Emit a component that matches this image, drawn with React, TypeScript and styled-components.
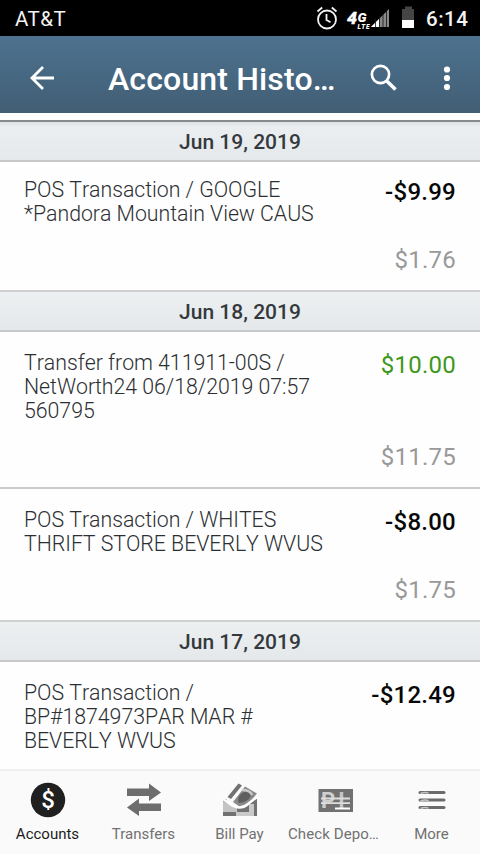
import React from "react";
import styled, { createGlobalStyle } from "styled-components";

const GlobalStyle = createGlobalStyle`
  * { box-sizing: border-box; }
  body { margin: 0; background: #fff; font-family: Roboto, "Liberation Sans", sans-serif; }
`;

const Screen = styled.div`
  width: 480px;
  height: 854px;
  display: flex;
  flex-direction: column;
  overflow: hidden;
  background: #fefefe;
`;

const StatusBar = styled.header`
  height: 36px;
  flex: none;
  display: flex;
  align-items: center;
  padding: 2px 12px 0 15px;
  background: #000;
  color: #f4f4f4;
`;

const Carrier = styled.span`
  flex: 1;
  font-size: 20.5px;
  letter-spacing: 0.5px;
  line-height: 34px;
`;

const StatusIcons = styled.svg`
  display: block;
  width: 110px;
  height: 34px;
`;

const Clock = styled.span`
  width: 43px;
  padding-left: 1px;
  font-size: 20.5px;
  font-weight: 500;
  letter-spacing: 0.5px;
  line-height: 34px;
  white-space: nowrap;
`;

const TitleBar = styled.div`
  height: 77px;
  flex: none;
  display: flex;
  align-items: center;
  padding: 7px 19px 0 26px;
  background: linear-gradient(#4d728f, #486a85 40%, #425e74);
  color: #fff;
`;

const BarIcon = styled.svg<{ $w: number }>`
  display: block;
  flex: none;
  width: ${(p) => p.$w}px;
  height: 32px;
`;

const Title = styled.h1`
  flex: 1;
  margin: 0 0 0 50px;
  padding-top: 2px;
  font-size: 32px;
  font-weight: 500;
  letter-spacing: 0.15px;
  line-height: 40px;
  white-space: nowrap;
`;

const History = styled.main`
  flex: 1;
  min-height: 0;
  margin-top: 7px;
  overflow: hidden;
`;

const DateHeader = styled.h2<{ $pinned?: boolean }>`
  height: 42px;
  margin: 0;
  border-top: 2px solid ${(p) => (p.$pinned ? "#888b8b" : "#cfd1d1")};
  border-bottom: 2px solid #c6c8c9;
  background: ${(p) =>
    p.$pinned
      ? "linear-gradient(#dde1e3, #eaeef0 5px, #e5e9eb)"
      : "linear-gradient(#ecf0f1, #e4e8ea)"};
  color: #34393d;
  font-size: 21px;
  font-weight: 500;
  letter-spacing: 0;
  line-height: 41px;
  text-align: center;
`;

const Row = styled.article<{ $height: number; $top: number; $divided?: boolean }>`
  height: ${(p) => p.$height}px;
  display: flex;
  justify-content: space-between;
  padding: ${(p) => p.$top}px 24px 16px;
  border-bottom: ${(p) => (p.$divided ? "2px solid #cacccc" : "0")};
`;

const Description = styled.p`
  margin: 0;
  color: #2c2f32;
  font-size: 21.3px;
  font-weight: 300;
  font-kerning: none;
  letter-spacing: -0.03px;
  line-height: 24px;
  white-space: pre;
`;

const Figures = styled.div`
  display: flex;
  flex-direction: column;
  justify-content: space-between;
  align-items: flex-end;
`;

const Amount = styled.span<{ $tone: string; $weight: number }>`
  color: ${(p) => p.$tone};
  font-size: 24px;
  font-weight: ${(p) => p.$weight};
  letter-spacing: 0.25px;
  line-height: 28px;
`;

const TabBar = styled.nav`
  height: 85px;
  flex: none;
  display: grid;
  grid-template-columns: repeat(5, 1fr);
  border-top: 2px solid #f0f0f0;
  background: #fafafa;
`;

const Tab = styled.div<{ $active?: boolean }>`
  display: flex;
  flex-direction: column;
  align-items: center;
  padding-top: 10px;
  color: ${(p) => (p.$active ? "#1c1c1c" : "#717171")};
`;

const TabIcon = styled.svg`
  display: block;
  width: 40px;
  height: 38px;
`;

const TabLabel = styled.span<{ $wide?: boolean }>`
  margin-top: 5px;
  padding-right: ${(p) => (p.$wide ? 5 : 1)}px;
  font-size: 15px;
  letter-spacing: ${(p) => (p.$wide ? 0.1 : 0)}px;
  line-height: 20px;
  white-space: nowrap;
`;

const DollarText = styled.text`
  font-family: Roboto, sans-serif;
  font-size: 24px;
  font-weight: 500;
  text-anchor: middle;
`;

const NetworkText = styled.text<{ $size: number }>`
  font-family: Roboto, sans-serif;
  font-size: ${(p) => p.$size}px;
  font-weight: 900;
  font-style: italic;
  fill: #fff;
`;

const CheckText = styled.text`
  font-family: Roboto, sans-serif;
  font-size: 22px;
  font-weight: 700;
  fill: #cfcfcf;
`;

type Transaction = { lines: string[]; amount: string; balance?: string; height: number; top: number; credit?: boolean; divided?: boolean };
type Day = { date: string; pinned?: boolean; items: Transaction[] };

const days: Day[] = [
  {
    date: "Jun 19, 2019",
    pinned: true,
    items: [{ lines: ["POS Transaction / GOOGLE", "*Pandora Mountain View CAUS"], amount: "-$9.99", balance: "$1.76", height: 128, top: 16 }],
  },
  {
    date: "Jun 18, 2019",
    items: [
      { lines: ["Transfer from 411911-00S /", "NetWorth24 06/18/2019 07:57", "560795"], amount: "$10.00", balance: "$11.75", height: 157, top: 19, credit: true, divided: true },
      { lines: ["POS Transaction / WHITES", "THRIFT STORE BEVERLY WVUS"], amount: "-$8.00", balance: "$1.75", height: 131, top: 19 },
    ],
  },
  {
    date: "Jun 17, 2019",
    items: [{ lines: ["POS Transaction /", "BP#1874973PAR MAR #", "BEVERLY WVUS"], amount: "-$12.49", height: 157, top: 19 }],
  },
];

const TransactionRow = ({ item }: { item: Transaction }) => (
  <Row $height={item.height} $top={item.top} $divided={item.divided}>
    <Description>{item.lines.join("\n")}</Description>
    <Figures>
      <Amount $tone={item.credit ? "#3f981c" : "#080808"} $weight={item.credit ? 400 : 500}>{item.amount}</Amount>
      {item.balance && <Amount $tone="#999" $weight={400}>{item.balance}</Amount>}
    </Figures>
  </Row>
);

const AccountsIcon = () => (
  <TabIcon viewBox="0 0 40 38">
    <circle cx="20" cy="19" r="17.2" fill="#202020" />
    <DollarText x="20" y="27.3" fill="#fff">$</DollarText>
  </TabIcon>
);

const TransfersIcon = () => (
  <TabIcon viewBox="0 0 40 38" fill="#6d6d6d">
    <path d="M3 7.5H25V2.5L37 11.5L25 20V15H3ZM37 22.5H15V17.5L3 26.5L15 35V30H37Z" />
  </TabIcon>
);

const BillPayIcon = () => (
  <TabIcon viewBox="0 0 40 38">
    <path d="M3 18H37V35H3Z" fill="#717171" />
    <path d="M3 20L10 24H17V31H3Z" fill="#c4c4c4" />
    <path d="M16 31H30V35H16ZM29 23H34V35H29Z" fill="#c9c9c9" />
    <path d="M17 2L37 14L28 24Q20 30 10 24L6 18Z" fill="#fafafa" />
    <path d="M18.500 2.500L22 4.500L11 18L7.500 16Z" fill="#717171" />
    <path d="M25 5.500L37 12.500L28 23L20 26L13 21Z" fill="#8a8a8a" />
    <path d="M22 12Q30 8 31 15Q27 22 19 22Q16 17 22 12Z" fill="#606060" />
    <path d="M22 9Q30 9 32 14" fill="none" stroke="#c9c9c9" strokeWidth="2.500" />
    <path d="M3 18L10 23Q20 30 28 23L37 16" fill="none" stroke="#fff" strokeWidth="2.500" />
  </TabIcon>
);

const CheckIcon = () => (
  <TabIcon viewBox="0 0 40 38">
    <path d="M2.5 8H37V31H2.5Z" fill="#717171" />
    <CheckText x="5" y="27">P</CheckText>
    <path d="M25.500 11V27" stroke="#c4c4c4" strokeWidth="3.5" />
    <path d="M5 17.5H34M5 22.2H34" stroke="#dedede" strokeWidth="1.8" />
    <path d="M19 27.5H34" stroke="#fff" strokeWidth="2" />
  </TabIcon>
);

const MoreIcon = () => (
  <TabIcon viewBox="0 0 40 38">
    {[11.5, 19, 26.5].map((y) => (
      <g key={y} strokeLinecap="round">
        <path d={`M8 ${y}H32`} stroke="#6b6b6b" strokeWidth="3" />
        <path d={`M9 ${y + 0.8}Q13 ${y - 0.8} 16 ${y + 0.5}`} fill="none" stroke="#c4c4c4" strokeWidth="1.5" />
      </g>
    ))}
  </TabIcon>
);

const tabs = [
  { label: "Accounts", Icon: AccountsIcon, active: true },
  { label: "Transfers", Icon: TransfersIcon },
  { label: "Bill Pay", Icon: BillPayIcon },
  { label: "Check Depo…", Icon: CheckIcon, wide: true },
  { label: "More", Icon: MoreIcon },
];

export default function App() {
  return (
    <>
      <GlobalStyle />
      <Screen>
        <StatusBar>
          <Carrier>AT&amp;T</Carrier>
          <StatusIcons viewBox="0 0 110 34">
            <g fill="none" stroke="#f4f4f4" strokeWidth="1.8">
              <circle cx="12" cy="17.5" r="9" />
              <path d="M11.5 12V18L15.5 20.3M2.5 9.5L7.2 5.5M21.5 9.5L16.8 5.5" />
            </g>
            <NetworkText $size={16} x="32" y="21.500" textLength="10" lengthAdjust="spacingAndGlyphs" stroke="#fff" strokeWidth="0.3">4</NetworkText>
            <NetworkText $size={12} x="42.500" y="19.500" textLength="9" lengthAdjust="spacingAndGlyphs">G</NetworkText>
            <NetworkText $size={6.5} x="42.500" y="27" textLength="12" lengthAdjust="spacing">LTE</NetworkText>
            <path d="M56 25L74 7V25Z" fill="#888" />
            <path d="M56 25L64 17V25Z" fill="#fff" />
            <path d="M60.500 16V26M64.500 14V26M68 12V26M71.500 8V26" stroke="#111" strokeWidth="0.8" />
            <path d="M87 7H90V4.500H97V7H99V26H87Z" fill="#454545" />
            <path d="M87 18H99V26H87Z" fill="#fff" />
          </StatusIcons>
          <Clock>6:14</Clock>
        </StatusBar>
        <TitleBar>
          <BarIcon $w={32} viewBox="0 0 32 32" fill="none" stroke="#fff" strokeWidth="2.8">
            <path d="M28 16H6M17 5L6 16L17 27" />
          </BarIcon>
          <Title>Account Histo…</Title>
          <BarIcon $w={32} viewBox="0 0 32 32" fill="none" stroke="#fff">
            <circle cx="15.500" cy="12.500" r="8.600" strokeWidth="2.700" />
            <path d="M21.500 18.700L30.500 27.500" strokeWidth="3.600" />
          </BarIcon>
          <BarIcon $w={64} viewBox="0 0 64 32" fill="#fff">
            <circle cx="50" cy="7.500" r="3.100" />
            <circle cx="50" cy="16" r="3.100" />
            <circle cx="50" cy="25" r="3.100" />
          </BarIcon>
        </TitleBar>
        <History>
          {days.map((day) => (
            <section key={day.date}>
              <DateHeader $pinned={day.pinned}>{day.date}</DateHeader>
              {day.items.map((item) => (
                <TransactionRow key={item.amount} item={item} />
              ))}
            </section>
          ))}
        </History>
        <TabBar>
          {tabs.map(({ label, Icon, active, wide }) => (
            <Tab key={label} $active={active}>
              <Icon />
              <TabLabel $wide={wide}>{label}</TabLabel>
            </Tab>
          ))}
        </TabBar>
      </Screen>
    </>
  );
}
